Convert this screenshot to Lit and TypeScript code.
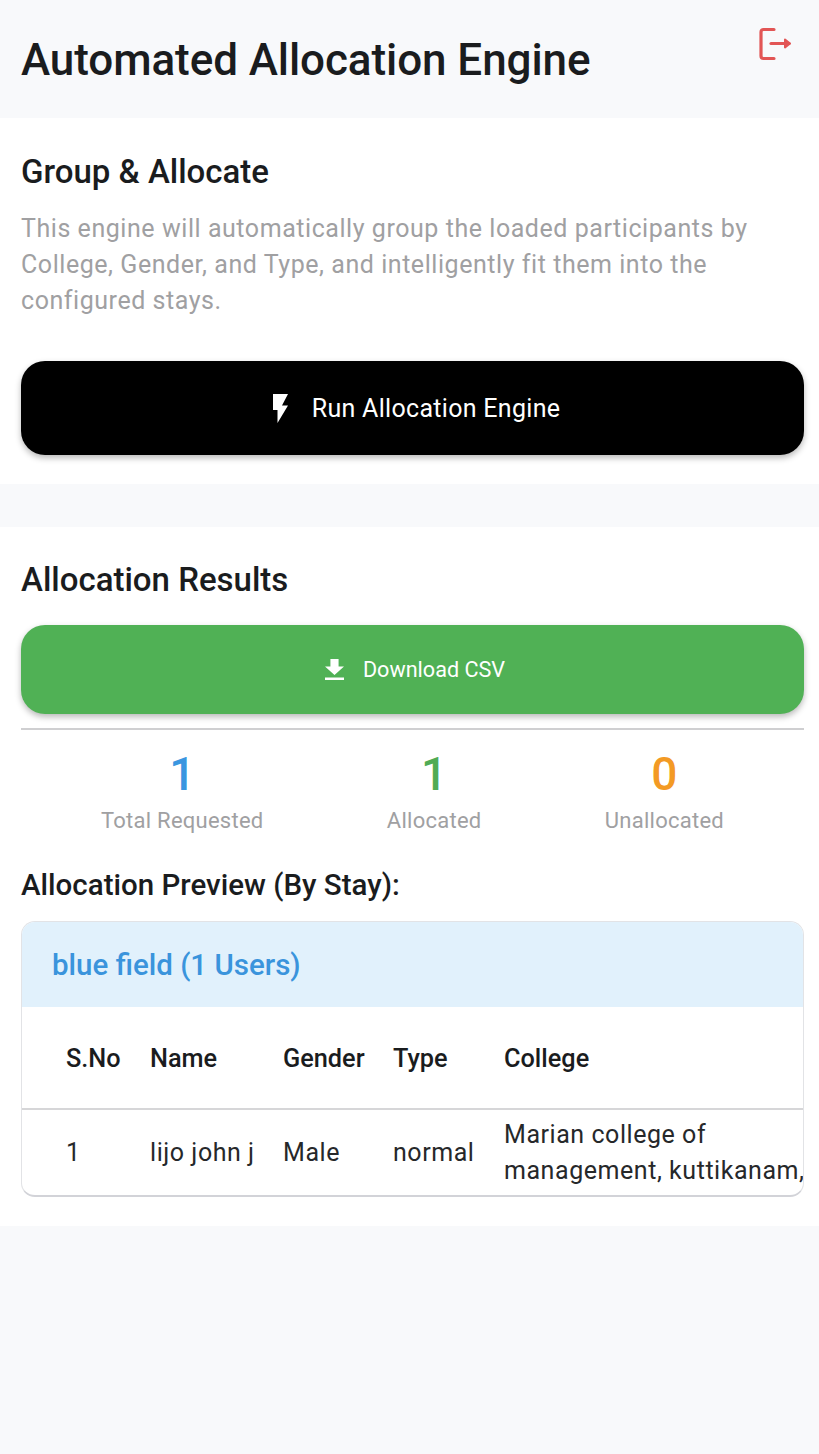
import { LitElement, html, css } from "lit";
import { customElement } from "lit/decorators.js";

@customElement("app-root")
export class AppRoot extends LitElement {
  static styles = css`
    :host { display: block; min-height: 1454px; background: #f8f9fb; font-family: Roboto, "Liberation Sans", sans-serif; color: #1a1c1e; }
    .top { height: 118px; box-sizing: border-box; padding: 2px 21px 0; position: relative; display: flex; align-items: center; }
    h1 { margin: 0; font-size: 44px; font-weight: 500; line-height: 116px; letter-spacing: -0.08px; }
    .logout { position: absolute; left: 756px; top: 25px; width: 38px; height: 38px; }
    .card { background: #fff; padding: 0 15px 0 21px; }
    .c1 { height: 366px; box-sizing: border-box; padding-top: 33px; }
    .c2 { height: 699px; box-sizing: border-box; margin-top: 43px; padding-top: 32px; }
    h2 { margin: 0; font-size: 33px; font-weight: 500; line-height: 41px; }
    p { margin: 19px 0 0; font-size: 25px; line-height: 36px; color: #a0a0a2; letter-spacing: 0.55px; }
    .btn { display: flex; align-items: center; justify-content: center; color: #fff; border-radius: 24px; box-shadow: 0 3px 6px rgba(0,0,0,.28); }
    .run { margin-top: 42px; height: 94px; background: #000; font-size: 25px; gap: 24px; letter-spacing: .3px; padding-left: 8px; }
    .dl { margin-top: 25px; height: 89px; background: #50b155; font-size: 21.6px; gap: 19px; padding-left: 5px; }
    .rule { height: 2px; background: #cfcfd1; margin-top: 14px; }
    .stats { display: flex; justify-content: space-between; text-align: center; margin-top: 17px; padding: 0 80px; }
    .num { font-size: 46px; font-weight: 500; line-height: 54px; }
    .lab { font-size: 22px; line-height: 28px; color: #a0a0a2; letter-spacing: .25px; margin-top: 6px; }
    h3 { margin: 31px 0 0; font-size: 29.5px; font-weight: 500; line-height: 38px; }
    .panel { margin-top: 17px; height: 276px; box-sizing: border-box; border: 1px solid #e2e3e6; border-bottom: 2px solid #d2d3d8; border-radius: 14px; overflow: hidden; }
    .phead { height: 85px; background: #e1f1fc; color: #3a94dc; font-size: 29.5px; font-weight: 500; line-height: 87px; padding-left: 30px; }
    .row { display: grid; grid-template-columns: 84px 133px 110px 111px max-content; padding-left: 44px; white-space: nowrap; }
    .th { height: 100px; padding-top: 1px; align-items: center; font-size: 25.3px; font-weight: 500; border-bottom: 2px solid #d6d6d8; }
    .td { height: 85px; align-items: center; font-size: 25px; line-height: 36px; letter-spacing: .55px; color: #26282a; }
  `;
  render() {
    return html`
      <div class="top">
        <h1>Automated Allocation Engine</h1>
        <svg class="logout" viewBox="0 0 38 38" fill="none" stroke="#e25555" stroke-width="3.2" stroke-linecap="round" stroke-linejoin="round">
          <path d="M18 4.500H7.500a2.500 2.500 0 0 0-2.500 2.500v24a2.500 2.500 0 0 0 2.500 2.500H18" />
          <path d="M15 18.500h18" />
          <path d="M29 14.500 34 18.500l-5 4z" fill="#e25555" stroke-width="2"/>
        </svg>
      </div>
      <section class="card c1">
        <h2>Group &amp; Allocate</h2>
        <p>This engine will automatically group the loaded participants by<br />College, Gender, and Type, and intelligently fit them into the<br />configured stays.</p>
        <div class="btn run">
          <svg width="15" height="29" viewBox="7 2 10 20" preserveAspectRatio="none" fill="#fff"><path d="M7 2v11h3v9l7-12h-4l4-8z"/></svg>
          <span>Run Allocation Engine</span>
        </div>
      </section>
      <section class="card c2">
        <h2>Allocation Results</h2>
        <div class="btn dl">
          <svg width="19" height="21" viewBox="5 3 14 17" preserveAspectRatio="none" fill="#fff"><path d="M19 9h-4V3H9v6H5l7 7 7-7zM5 18v2h14v-2H5z"/></svg>
          <span>Download CSV</span>
        </div>
        <div class="rule"></div>
        <div class="stats">
          <div><div class="num" style="color:#3a96e0">1</div><div class="lab">Total Requested</div></div>
          <div><div class="num" style="color:#50ab54">1</div><div class="lab">Allocated</div></div>
          <div><div class="num" style="color:#f39a24">0</div><div class="lab">Unallocated</div></div>
        </div>
        <h3>Allocation Preview (By Stay):</h3>
        <div class="panel">
          <div class="phead">blue field (1 Users)</div>
          <div class="row th"><span>S.No</span><span>Name</span><span>Gender</span><span>Type</span><span>College</span></div>
          <div class="row td"><span>1</span><span>lijo john j</span><span>Male</span><span>normal</span><span>Marian college of<br />management, kuttikanam,</span></div>
        </div>
      </section>
    `;
  }
}
